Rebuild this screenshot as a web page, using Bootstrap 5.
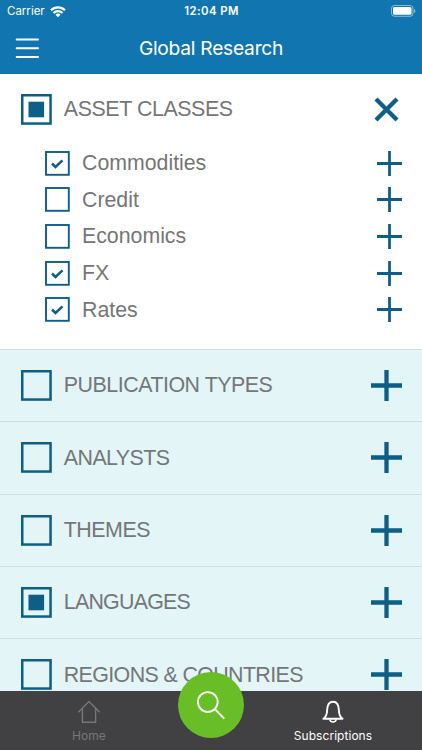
<!DOCTYPE html>
<html lang="en">
<head>
  <meta charset="UTF-8" />
  <meta name="viewport" content="width=device-width, initial-scale=1.0"/>
  <title>Global Research</title>
  <link href="https://cdn.jsdelivr.net/npm/bootstrap@5.3.0/dist/css/bootstrap.min.css" rel="stylesheet">
  <style>
    body { font-family: "Liberation Sans", Arial, sans-serif; color: #757678; line-height: 1; }
    svg { display: block; flex: none; }
    .app { height: 750px; }
    .app-header { height: 74px; background: #1176af; font-family: Inter, sans-serif; }
    .status-bar { height: 22px; padding: 0 6px 0 7px; font-size: 11.5px; }
    .status-bar > * { flex: 1 1 0; }
    .status-text { padding-top: 1px; }
    .status-time { font-size: 11.3px; letter-spacing: .45px; }
    .title-bar { height: 52px; padding: 0 15px 1px; }
    .title-bar h1 { font-size: 19.2px; letter-spacing: -.25px; padding-top: 2px; }
    .title-bar > * { flex: none; width: 26px; }
    .title-bar > h1 { flex: 1; }
    .filter-row { height: 72.3px; padding: 0 20.4px 0 20.8px; background: #e3f5f6; border-top: 1.5px solid #cfdfe1; }
    .filter-open { height: 71px; background: #fff; border: 0; }
    .filter-name { font-size: 21.4px; margin-left: 12px; padding-top: 1px; white-space: nowrap; }
    .sub-list { height: 204px; padding: 0 20.4px 0 45px; }
    .sub-row { height: 36.65px; }
    .sub-name { font-size: 21.3px; margin-left: 12px; padding-top: 1px; }
    .tab-bar { height: 59px; background: #414042; font-family: Inter, sans-serif; font-size: 12px; color: #fff; }
    .tab-item { width: 178px; padding-top: 9px; }
    .tab-item.idle { color: #77777a; }
    .tab-label { margin-top: 6px; letter-spacing: .04px; }
    .search-btn { width: 66px; height: 66px; margin-top: -19px; background: #69be28; z-index: 2; }
  </style>
</head>
<body>
  <div class="app d-flex flex-column overflow-hidden">
    <header class="app-header text-white flex-shrink-0">
      <div class="status-bar d-flex align-items-center">
        <div class="status-text d-flex align-items-center">
          <span>Carrier</span>
          <svg class="ms-1" width="17" height="12" viewBox="-1 0 17 12" fill="none" stroke="#fff" stroke-width="2.1">
            <path d="M1 4.2a10 10 0 0 1 14 0M3.5 7a6.4 6.4 0 0 1 9 0"/>
            <path d="M8 11.3 5.5 8.8a3.5 3.5 0 0 1 5 0z" fill="#fff" stroke="none"/>
          </svg>
        </div>
        <div class="status-time status-text fw-semibold text-center">12:04 PM</div>
        <div class="d-flex justify-content-end">
          <svg width="25" height="12" viewBox="0 0 25 12">
            <rect x=".5" y=".5" width="21.5" height="10.8" rx="3" fill="none" stroke="#fff" stroke-opacity=".5"/>
            <rect x="2" y="2" width="18.5" height="7.8" rx="1.6" fill="#fff"/>
            <path d="M23.2 4v4c1.5-.6 1.5-3.4 0-4z" fill="#fff" fill-opacity=".6"/>
          </svg>
        </div>
      </div>
      <div class="title-bar d-flex align-items-center">
        <svg width="26" height="22" viewBox="0 0 26 22" stroke="#fff" stroke-width="2" stroke-linecap="round">
          <path d="M1.700 2.500H23M1.700 11.200H23M1.700 20H23"/>
        </svg>
        <h1 class="mb-0 fw-normal text-center">Global Research</h1>
        <span></span>
      </div>
    </header>

    <main class="flex-grow-1 overflow-hidden" id="filters"></main>

    <nav class="tab-bar d-flex flex-shrink-0">
      <div class="tab-item idle d-flex flex-column align-items-center">
        <svg width="24" height="24" viewBox="0 0 24 24" fill="none" stroke="currentColor" stroke-width="1.4">
          <path d="M1.300 12.300 12 1.500l10.700 10.800M5.400 8.700v13.500h13.200V8.700"/>
        </svg>
        <span class="tab-label">Home</span>
      </div>
      <div class="search-btn rounded-circle d-flex align-items-center justify-content-center">
        <svg width="30" height="30" viewBox="0 0 30 30" fill="none" stroke="#fff" stroke-width="1.8">
          <circle cx="11.800" cy="12" r="9.900"/><path d="m18.900 19.200 9.400 9.400"/>
        </svg>
      </div>
      <div class="tab-item d-flex flex-column align-items-center">
        <svg width="24" height="24" viewBox="0 0 24 24" fill="none" stroke="currentColor" stroke-width="1.9" stroke-linejoin="round">
          <path d="M2.400 18.800C5 17 6 14.500 6.100 10.500 6.200 4.500 8.200 1.700 12 1.700s5.800 2.800 5.900 8.800c.1 4 1.100 6.500 3.700 8.300z"/>
          <path d="M8.900 19.500c.4 3.300 5.800 3.300 6.200 0" stroke-width="1.600"/>
        </svg>
        <span class="tab-label">Subscriptions</span>
      </div>
    </nav>
  </div>

  <script src="https://cdn.jsdelivr.net/npm/bootstrap@5.3.0/dist/js/bootstrap.bundle.min.js"></script>
  <script>
    // name, checked
    const subs = [['Commodities', true], ['Credit', false], ['Economics', false], ['FX', true], ['Rates', true]];
    // name, partly selected, tracking in px
    const groups = [
      ['PUBLICATION TYPES', false, -.48],
      ['ANALYSTS', false, -.56],
      ['THEMES', false, -.5],
      ['LANGUAGES', true, -.77],
      ['REGIONS & COUNTRIES', false, -.62]
    ];

    const bigBox = some => `
      <svg width="31" height="31" viewBox="0 0 31 31">
        <rect x="1.250" y="1.250" width="28.300" height="28.300" fill="none" stroke="#0d5f87" stroke-width="2.500"/>
        ${some ? '<rect x="7.500" y="7.700" width="15.600" height="15.600" fill="#0d5f87"/>' : ''}
      </svg>`;
    const smallBox = on => `
      <svg width="25" height="25" viewBox="0 0 25 25" fill="none" stroke="#0d5f87">
        <rect x="1" y="1" width="22.800" height="22.800" stroke-width="1.900"/>
        ${on ? '<path d="m7 12.500 3.500 3.500 7-6.700" stroke-width="2.500"/>' : ''}
      </svg>`;
    const plus = '<svg width="31" height="31" viewBox="0 0 31 31" stroke="#0d5f87" stroke-width="4.300"><path d="M15.500 0v31M0 15.500h31"/></svg>';
    const smallPlus = '<svg width="25" height="25" viewBox="0 0 25 25" stroke="#0d5f87" stroke-width="2.800"><path d="M12.500 0v25M0 12.500h25"/></svg>';
    const cross = '<svg width="31" height="31" viewBox="0 0 31 31" stroke="#0d5f87" stroke-width="4.300"><path d="m5 5 21 21M26 5 5 26"/></svg>';

    function row(name, some, tracking, icon, extra) {
      return `
        <div class="filter-row ${extra} d-flex align-items-center">
          ${bigBox(some)}
          <span class="filter-name" style="letter-spacing: ${tracking}px">${name.replace('&', '&amp;')}</span>
          <span class="ms-auto">${icon}</span>
        </div>`;
    }

    document.getElementById('filters').innerHTML =
      row('ASSET CLASSES', true, -.43, cross, 'filter-open') +
      '<div class="sub-list bg-white">' + subs.map(([name, on]) => `
        <div class="sub-row d-flex align-items-center">
          ${smallBox(on)}
          <span class="sub-name">${name}</span>
          <span class="ms-auto">${smallPlus}</span>
        </div>`).join('') + '</div>' +
      groups.map(([name, some, tracking]) => row(name, some, tracking, plus, '')).join('');
  </script>
</body>
</html>
